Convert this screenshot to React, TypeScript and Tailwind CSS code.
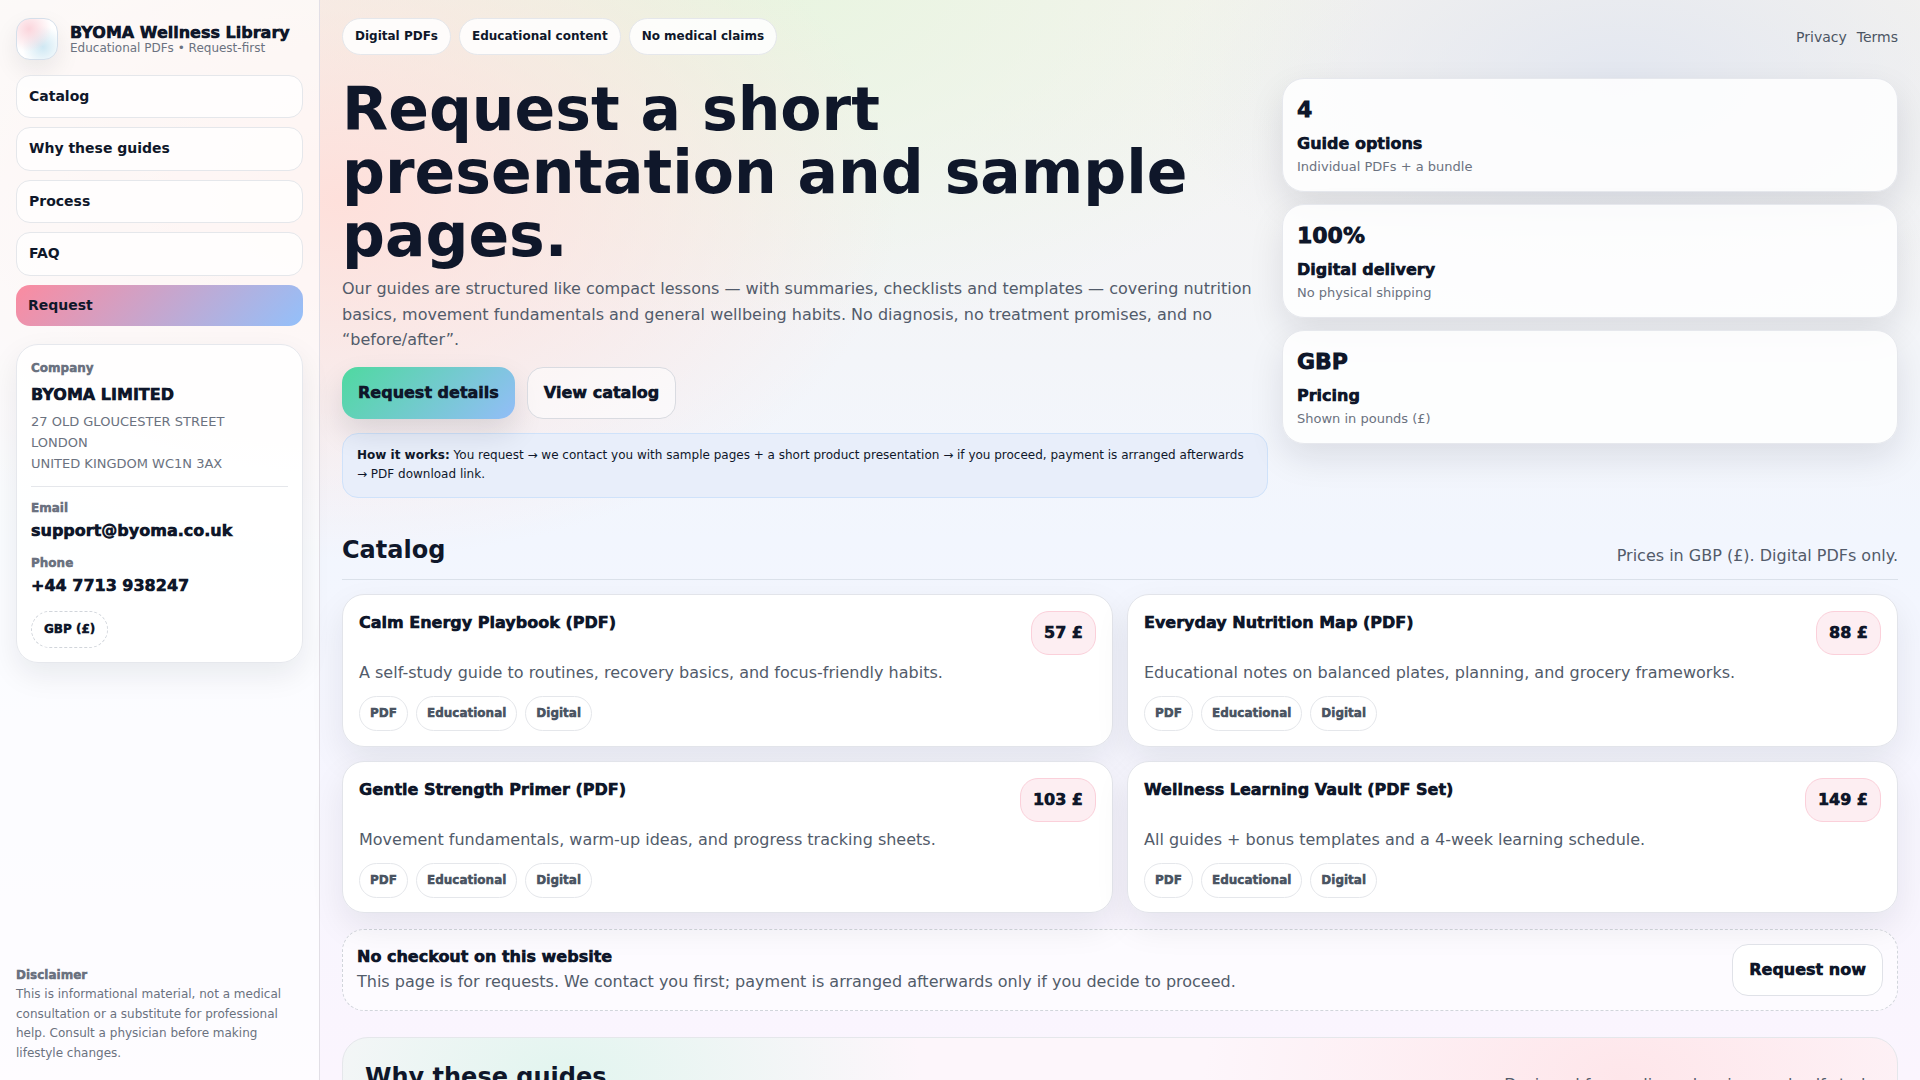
const stats = [
  { value: "4", label: "Guide options", note: "Individual PDFs + a bundle" },
  { value: "100%", label: "Digital delivery", note: "No physical shipping" },
  { value: "GBP", label: "Pricing", note: "Shown in pounds (£)" },
];

const guides = [
  { title: "Calm Energy Playbook (PDF)", price: "57 £", text: "A self-study guide to routines, recovery basics, and focus-friendly habits." },
  { title: "Everyday Nutrition Map (PDF)", price: "88 £", text: "Educational notes on balanced plates, planning, and grocery frameworks." },
  { title: "Gentle Strength Primer (PDF)", price: "103 £", text: "Movement fundamentals, warm-up ideas, and progress tracking sheets." },
  { title: "Wellness Learning Vault (PDF Set)", price: "149 £", text: "All guides + bonus templates and a 4-week learning schedule." },
];

function Sidebar() {
  return (
    <aside className="w-[320px] shrink-0 h-full flex flex-col justify-between border-r border-[#e2dfe6] bg-white/65 px-4 pt-[18px] pb-[17px]">
      <div>
        <div className="flex items-center gap-3 mb-[14.5px]">
          <div className="w-[42px] h-[42px] rounded-[14px] border border-[#d5dfea] shadow-[0_10px_24px_rgba(15,23,42,0.08)] bg-white bg-[radial-gradient(circle_at_30%_25%,#fbd5dc,transparent_55%),radial-gradient(circle_at_65%_70%,#cfe8f3,transparent_55%)]" />
          <div>
            <div className="text-base leading-[18px] font-[950] text-[#0f172a]">BYOMA Wellness Library</div>
            <div className="text-xs leading-[12px] text-[#6b7280]">Educational PDFs • Request-first</div>
          </div>
        </div>
        <nav className="flex flex-col gap-[9px]">
          {["Catalog", "Why these guides", "Process", "FAQ"].map((item) => (
            <a key={item} className="block border border-[#e5e7eb] bg-white/75 rounded-[14px] p-3 text-sm leading-tight font-bold text-[#0f172a]">
              {item}
            </a>
          ))}
          <a className="block rounded-[14px] p-3 text-sm leading-tight font-bold text-[#0f172a] bg-[linear-gradient(135deg,#fb8ba0,#93c0fa)]">Request</a>
        </nav>
        <div className="mt-[18px] bg-white/90 rounded-[22px] border border-[#e6e8ed] px-[14px] pt-[15px] pb-[14px] shadow-[0_12px_30px_rgba(15,23,42,0.08)]">
          <div className="text-xs leading-[16px] font-[950] text-[#6b7280]">Company</div>
          <div className="mt-[9px] text-base leading-[20px] font-[950] text-[#0f172a]">BYOMA LIMITED</div>
          <div className="mt-[7px] text-[13px] leading-[20.8px] text-[#6b7280]">
            27 OLD GLOUCESTER STREET<br />LONDON<br />UNITED KINGDOM WC1N 3AX
          </div>
          <div className="mt-[11.5px] border-t border-[#e5e7eb]" />
          <div className="mt-[13px] text-xs leading-[16px] font-[950] text-[#6b7280]">Email</div>
          <div className="mt-[5px] text-base leading-[20px] font-[950] text-[#0f172a]">support@byoma.co.uk</div>
          <div className="mt-[14.5px] text-xs leading-[16px] font-[950] text-[#6b7280]">Phone</div>
          <div className="mt-[5px] text-base leading-[20px] font-[950] text-[#0f172a]">+44 7713 938247</div>
          <span className="mt-[14.5px] inline-block rounded-full border border-dashed border-[#d1d5db] px-3 py-[10px] text-xs leading-[15px] font-[950] text-[#0f172a]">GBP (£)</span>
        </div>
      </div>
      <div className="text-xs leading-[19.4px] text-[#6b7280]">
        <div className="font-[950]">Disclaimer</div>
        This is informational material, not a medical consultation or a substitute for professional help. Consult a physician before making lifestyle changes.
      </div>
    </aside>
  );
}

function GuideCard({ title, price, text }: { title: string; price: string; text: string }) {
  return (
    <div className="bg-white/95 border border-[#e2e4ea] rounded-[22px] px-4 pt-4 pb-[14.5px] shadow-[0_14px_34px_rgba(15,23,42,0.08)]">
      <div className="flex items-start justify-between">
        <h3 className="text-base leading-[20px] pt-[2px] font-[950] text-[#0f172a]">{title}</h3>
        <span className="rounded-[18px] border border-[#fbd0da] bg-[#fdeef2] px-3 py-[11px] text-base leading-[20px] font-[950] text-[#0f172a]">{price}</span>
      </div>
      <p className="mt-[5px] text-base leading-[25.6px] text-[#525b6a]">{text}</p>
      <div className="mt-[10.5px] flex gap-2">
        {["PDF", "Educational", "Digital"].map((tag) => (
          <span key={tag} className="rounded-full border border-[#e5e7eb] bg-white px-[10px] py-[9px] text-xs leading-[15px] font-[950] text-[#4b5563]">{tag}</span>
        ))}
      </div>
    </div>
  );
}

export default function App() {
  return (
    <div
      className="h-screen overflow-hidden flex text-[#0f172a] bg-[radial-gradient(560px_360px_at_340px_200px,#fee0db,transparent_100%),radial-gradient(620px_360px_at_760px_-30px,#e8f5e0,transparent_100%),radial-gradient(460px_240px_at_1620px_80px,#e3e7f0,transparent_100%),linear-gradient(180deg,#f5f3ef_0%,#f2f6fe_50%,#fbf5fe_100%)]"
      style={{ fontFamily: '"DejaVu Sans", sans-serif' }}
    >
      <Sidebar />
      <main className="flex-1 min-w-0 px-[22px] pt-[18px]">
        <header className="flex items-center justify-between">
          <div className="flex gap-2">
            {["Digital PDFs", "Educational content", "No medical claims"].map((pill) => (
              <span key={pill} className="rounded-full border border-[#e5e7eb] bg-white/85 px-3 py-[10px] text-xs leading-[15px] font-bold text-[#0f172a]">{pill}</span>
            ))}
          </div>
          <div className="flex gap-[10px] text-sm text-[#4b5563]">
            <a>Privacy</a>
            <a>Terms</a>
          </div>
        </header>

        <section className="mt-[22.5px] grid grid-cols-[926px_616px] gap-[14px]">
          <div>
            <h1 className="text-[60px] leading-[63px] font-black text-[#0f172a]">Request a short presentation and sample pages.</h1>
            <p className="mt-[9.5px] text-base leading-[25.6px] text-[#525b6a]">
              Our guides are structured like compact lessons — with summaries, checklists and templates — covering nutrition basics, movement fundamentals and general wellbeing habits. No diagnosis, no treatment promises, and no “before/after”.
            </p>
            <div className="mt-[14px] flex gap-3">
              <a className="rounded-[16px] px-4 py-[15px] text-base leading-[22px] font-[950] text-[#0f172a] bg-[linear-gradient(135deg,#4fd9a0,#93bdf8)] shadow-[0_14px_30px_rgba(15,23,42,0.12)]">Request details</a>
              <a className="rounded-[16px] border border-[#d9dbe1] bg-white/50 px-4 py-[14px] text-base leading-[22px] font-[950] text-[#0f172a]">View catalog</a>
            </div>
            <div className="mt-[14px] rounded-[16px] border border-[#cfe2fa] bg-[#e8eefa] px-[14px] py-3 text-xs leading-[19.6px] text-[#0f172a]">
              <b className="font-bold">How it works:</b> You request → we contact you with sample pages + a short product presentation → if you proceed, payment is arranged afterwards → PDF download link.
            </div>
          </div>
          <div className="flex flex-col gap-3">
            {stats.map((s) => (
              <div key={s.label} className="bg-white/85 rounded-[22px] border border-[#e6e8ed] px-[14px] pt-[16.5px] h-[114px] shadow-[0_14px_34px_rgba(15,23,42,0.1)]">
                <div className="text-[22px] leading-[30px] font-[950] text-[#0f172a]">{s.value}</div>
                <div className="mt-[9px] text-base leading-[20px] font-[950] text-[#0f172a]">{s.label}</div>
                <div className="mt-[4px] text-[13px] leading-[18px] text-[#6b7280]">{s.note}</div>
              </div>
            ))}
          </div>
        </section>

        <div className="mt-[37px] flex items-end justify-between border-b border-[#dbe1ea] pb-[14px]">
          <h2 className="text-2xl leading-[30px] font-extrabold text-[#0f172a]">Catalog</h2>
          <p className="-mb-[1px] text-base leading-[20px] text-[#525b6a]">Prices in GBP (£). Digital PDFs only.</p>
        </div>

        <div className="mt-[14px] grid grid-cols-2 gap-[14px]">
          {guides.map((g) => (
            <GuideCard key={g.title} {...g} />
          ))}
        </div>

        <div className="mt-[15.5px] flex items-center justify-between rounded-[22px] border border-dashed border-[#d1d5db] bg-white/60 px-[14px] py-[14px]">
          <div>
            <div className="pt-[2px] text-base leading-[22px] font-[950] text-[#0f172a]">No checkout on this website</div>
            <div className="mt-[1px] text-base leading-[25.6px] text-[#525b6a]">This page is for requests. We contact you first; payment is arranged afterwards only if you decide to proceed.</div>
          </div>
          <a className="rounded-[16px] border border-[#e0e2e8] bg-white px-4 py-[14px] text-base leading-[22px] font-[950] text-[#0f172a]">Request now</a>
        </div>

        <section className="mt-[26.5px] rounded-[26px] border border-[#e5e7eb] px-[22px] pt-[24px] pb-10 bg-[#fdf6fb] bg-[radial-gradient(360px_220px_at_220px_40px,#e2f5ef,transparent_100%),radial-gradient(420px_240px_at_1280px_40px,#fee6ea,transparent_100%)]">
          <div className="flex items-end justify-between">
            <h2 className="text-2xl leading-[30px] font-extrabold text-[#0f172a]">Why these guides</h2>
            <p className="-mb-[3px] text-base leading-[20px] text-[#525b6a]">Designed for reading, planning, and self-study</p>
          </div>
        </section>
      </main>
    </div>
  );
}
